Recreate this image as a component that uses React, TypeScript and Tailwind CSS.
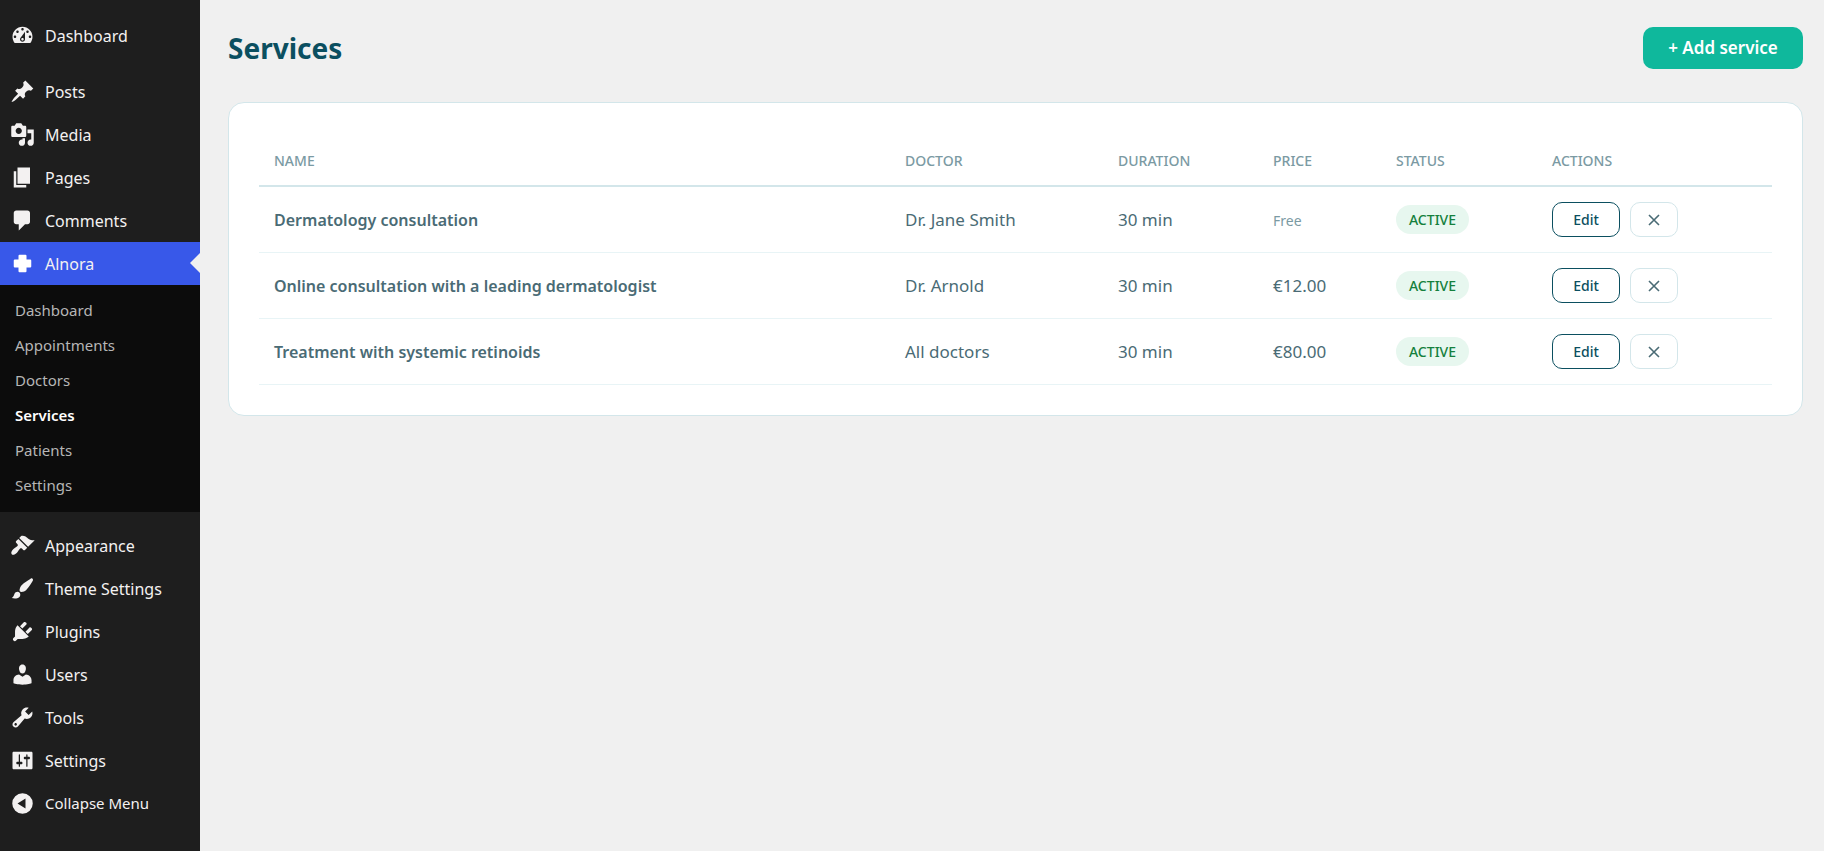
import type { ReactNode } from 'react';

interface MenuItem {
  label: string;
  icon: ReactNode;
}

interface Service {
  name: string;
  doctor: string;
  duration: string;
  price: string | null;
}

const mainItems: MenuItem[] = [
  {
    label: 'Posts',
    icon: <path d="M10.44 3.02l1.82-1.82 6.36 6.35-1.83 1.82c-1.05-.68-2.48-.57-3.41.36l-.75.75c-.92.93-1.04 2.35-.35 3.41l-1.83 1.82-2.41-2.41-2.8 2.79c-.42.42-3.38 2.71-3.8 2.29s1.86-3.39 2.28-3.81l2.79-2.79L4.1 9.36l1.83-1.82c1.05.69 2.48.57 3.4-.36l.75-.75c.93-.92 1.05-2.35.36-3.41z" />,
  },
  {
    label: 'Media',
    icon: <path d="M13 11V4c0-.55-.45-1-1-1h-1.67L9 1H5L3.67 3H2c-.55 0-1 .45-1 1v7c0 .55.45 1 1 1h10c.55 0 1-.45 1-1zM7 4.5c1.38 0 2.5 1.12 2.5 2.5S8.38 9.5 7 9.5 4.5 8.38 4.5 7 5.62 4.5 7 4.5zM14 6h5v10.5c0 1.38-1.12 2.5-2.5 2.5S14 17.88 14 16.5s1.12-2.5 2.5-2.5c.17 0 .34.02.5.05V9h-3V6zm-4 8.05V13h2v3.5c0 1.38-1.12 2.5-2.5 2.5S7 17.88 7 16.5 8.12 14 9.5 14c.17 0 .34.02.5.05z" />,
  },
  { label: 'Pages', icon: <path d="M6 15V2h10v13H6zm-1 1h8v2H3V5h2v11z" /> },
  {
    label: 'Comments',
    icon: <path d="M5 2h9c1.1 0 2 .9 2 2v7c0 1.1-.9 2-2 2h-2l-5 5v-5H5c-1.1 0-2-.9-2-2V4c0-1.1.9-2 2-2z" />,
  },
];

const toolItems: MenuItem[] = [
  {
    label: 'Appearance',
    icon: <path d="M14.48 11.06L7.41 3.99l1.5-1.5c.5-.56 2.3-.47 3.51.32 1.21.8 1.43 1.28 2.91 2.1 1.18.64 2.45 1.26 4.45.85zm-.71.71L6.7 4.7 4.93 6.47c-.39.39-.39 1.02 0 1.41l1.06 1.06c.39.39.39 1.03 0 1.42-.6.6-1.43 1.11-2.21 1.69-.35.26-.7.53-1.01.84C1.43 14.23.4 16.08 1.4 17.07c.99 1 2.84-.03 4.18-1.36.31-.31.58-.66.85-1.02.57-.78 1.08-1.61 1.69-2.21.39-.39 1.02-.39 1.41 0l1.06 1.06c.39.39 1.02.39 1.41 0z" />,
  },
  {
    label: 'Theme Settings',
    icon: <path d="M18.33 3.57s.27-.8-.31-1.36c-.53-.52-1.22-.24-1.22-.24-.61.3-5.76 3.47-7.67 5.57-.86.96-2.06 3.79-1.09 4.82.92.98 3.96-.17 4.79-1 2.06-2.06 5.21-7.17 5.5-7.79zM1.4 17.65c2.37-1.56 1.46-3.41 3.23-4.64.93-.65 2.22-.62 3.08.29.63.67.8 2.57-.16 3.46-1.57 1.45-4 1.55-6.15.89z" />,
  },
  {
    label: 'Plugins',
    icon: <path d="M13.11 4.36L9.87 7.6 8 5.73l3.24-3.24c.35-.34 1.05-.2 1.56.32.52.51.66 1.21.31 1.55zm-8 1.77l.91-1.12 9.01 9.01-1.19.84c-.71.71-2.63 1.16-3.82 1.16H6.14L4.9 17.26c-.59.59-1.54.59-2.12 0-.59-.58-.59-1.53 0-2.12l1.24-1.24v-3.88c0-1.13.4-3.19 1.09-3.89zm7.26 3.97l3.24-3.24c.34-.35 1.04-.21 1.55.31.52.51.66 1.21.31 1.55l-3.24 3.25z" />,
  },
  {
    label: 'Users',
    icon: <path d="M10 9.25c-2.27 0-2.73-3.44-2.73-3.44C7 4.02 7.82 2 9.97 2c2.16 0 2.98 2.02 2.71 3.81 0 0-.41 3.44-2.68 3.44zm0 2.57L12.72 10c2.39 0 4.52 2.33 4.52 4.53v2.49s-3.65 1.13-7.24 1.13c-3.65 0-7.24-1.13-7.24-1.13v-2.49c0-2.25 1.94-4.48 4.47-4.48z" />,
  },
  {
    label: 'Tools',
    icon: <path d="M16.68 9.77c-1.34 1.34-3.3 1.67-4.95.99l-5.41 6.52c-.99.99-2.59.99-3.58 0s-.99-2.59 0-3.57l6.52-5.42c-.68-1.65-.35-3.61.99-4.95 1.28-1.28 3.12-1.62 4.72-1.06l-2.89 2.89 2.82 2.82 2.86-2.87c.53 1.58.18 3.39-1.08 4.65zM3.81 16.21c.4.39 1.04.39 1.43 0 .4-.4.4-1.04 0-1.43-.39-.4-1.03-.4-1.43 0-.39.39-.39 1.03 0 1.43z" />,
  },
  {
    label: 'Settings',
    icon: <path d="M18 16V4c0-.55-.45-1-1-1H3c-.55 0-1 .45-1 1v12c0 .55.45 1 1 1h14c.55 0 1-.45 1-1zM8 11h1c.55 0 1 .45 1 1s-.45 1-1 1H8v1.5c0 .28-.22.5-.5.5s-.5-.22-.5-.5V13H6c-.55 0-1-.45-1-1s.45-1 1-1h1V5.5c0-.28.22-.5.5-.5s.5.22.5.5V11zm5-2h-1c-.55 0-1-.45-1-1s.45-1 1-1h1V5.5c0-.28.22-.5.5-.5s.5.22.5.5V7h1c.55 0 1 .45 1 1s-.45 1-1 1h-1v5.5c0 .28-.22.5-.5.5s-.5-.22-.5-.5V9z" />,
  },
];

const subItems = ['Dashboard', 'Appointments', 'Doctors', 'Services', 'Patients', 'Settings'];

const services: Service[] = [
  { name: 'Dermatology consultation', doctor: 'Dr. Jane Smith', duration: '30 min', price: null },
  { name: 'Online consultation with a leading dermatologist', doctor: 'Dr. Arnold', duration: '30 min', price: '€12.00' },
  { name: 'Treatment with systemic retinoids', doctor: 'All doctors', duration: '30 min', price: '€80.00' },
];

const columns = ['Name', 'Doctor', 'Duration', 'Price', 'Status', 'Actions'];

function MenuIcon({ children }: { children: ReactNode }) {
  return (
    <svg viewBox="0 0 20 20" className="h-[25px] w-[25px] shrink-0" fill="currentColor" fillRule="evenodd" aria-hidden="true">
      {children}
    </svg>
  );
}

function MenuLink({ item }: { item: MenuItem }) {
  return (
    <a href="#" className="flex h-[43px] items-center gap-[10px] pl-[10px] text-base text-[#f3f1f1] hover:text-white">
      <MenuIcon>{item.icon}</MenuIcon>
      {item.label}
    </a>
  );
}

function Sidebar() {
  return (
    <nav className="w-[200px] shrink-0 bg-[#1e1e1e] pt-[14px]">
      <MenuLink
        item={{
          label: 'Dashboard',
          icon: <path d="M3.76 16h12.48c1.1-1.37 1.76-3.11 1.76-5 0-4.42-3.58-8-8-8s-8 3.58-8 8c0 1.89.66 3.63 1.76 5zM10 4c.55 0 1 .45 1 1s-.45 1-1 1-1-.45-1-1 .45-1 1-1zM6 6c.55 0 1 .45 1 1s-.45 1-1 1-1-.45-1-1 .45-1 1-1zm8 0c.55 0 1 .45 1 1s-.45 1-1 1-1-.45-1-1 .45-1 1-1zm-5.37 5.55L12 7v6c0 1.1-.9 2-2 2s-2-.9-2-2c0-.57.24-1.08.63-1.45zM4 10c.55 0 1 .45 1 1s-.45 1-1 1-1-.45-1-1 .45-1 1-1zm12 0c.55 0 1 .45 1 1s-.45 1-1 1-1-.45-1-1 .45-1 1-1zm-5 3c0-.55-.45-1-1-1s-1 .45-1 1 .45 1 1 1 1-.45 1-1z" />,
        }}
      />
      <div className="mt-[13px]">
        {mainItems.map((item) => (
          <MenuLink key={item.label} item={item} />
        ))}
      </div>
      <div className="relative bg-[#3858e9]">
        <MenuLink
          item={{
            label: 'Alnora',
            icon: <path fill="#fff" d="M7.6 3h4.8c.5 0 .8.3.8.8v3h3c.5 0 .8.3.8.8v4.8c0 .5-.3.8-.8.8h-3v3c0 .5-.3.8-.8.8H7.6c-.5 0-.8-.3-.8-.8v-3h-3c-.5 0-.8-.3-.8-.8V7.6c0-.5.3-.8.8-.8h3v-3c0-.5.3-.8.8-.8z" />,
          }}
        />
        {/* arrow pointing at the open section */}
        <span className="absolute top-[11px] right-0 border-y-10 border-r-10 border-y-transparent border-r-[#f0f0f0]" />
      </div>
      <ul className="bg-[#0c0c0c] pt-2 pb-[9px]">
        {subItems.map((label) => (
          <li key={label}>
            <a
              href="#"
              className={
                label === 'Services'
                  ? 'flex h-[35px] items-center pl-[15px] text-[15px] font-semibold text-white'
                  : 'flex h-[35px] items-center pl-[15px] text-[15px] text-[#b6b6b6] hover:text-white'
              }
            >
              {label}
            </a>
          </li>
        ))}
      </ul>
      <div className="mt-3">
        {toolItems.map((item) => (
          <MenuLink key={item.label} item={item} />
        ))}
        <button type="button" className="flex h-[43px] w-full items-center gap-[10px] pl-[10px] text-[15px] text-[#f3f1f1]">
          <MenuIcon>
            <path d="M10 1.8a8.2 8.2 0 1 0 0 16.4 8.2 8.2 0 0 0 0-16.4zM12.4 6v8L6 10z" />
          </MenuIcon>
          Collapse Menu
        </button>
      </div>
    </nav>
  );
}

export default function App() {
  return (
    <div className="flex min-h-screen bg-[#f0f0f0] font-['Noto_Sans','Open_Sans',sans-serif]">
      <Sidebar />
      <main className="min-w-0 flex-1 pt-[27px] pr-[21px] pl-7">
        <div className="mb-[33px] flex items-center justify-between">
          <h1 className="text-[28px] leading-[42px] font-bold text-[#0b4f60]">Services</h1>
          <button type="button" className="h-[42px] w-40 rounded-[10px] bg-[#0fb89c] text-[17px] font-semibold text-white">
            + Add service
          </button>
        </div>

        <div className="rounded-2xl border border-[#d3e6ea] bg-white p-[30px]">
          <table className="w-full table-fixed border-separate border-spacing-0 text-left">
            <colgroup>
              <col className="w-[631px]" />
              <col className="w-[213px]" />
              <col className="w-[155px]" />
              <col className="w-[123px]" />
              <col className="w-[156px]" />
              <col className="w-[235px]" />
            </colgroup>
            <thead>
              <tr>
                {columns.map((column) => (
                  <th key={column} className="h-[54px] border-b-2 border-[#d3e6ea] px-[15px] pt-[3px] text-sm font-medium text-[#7b9aa3] uppercase">
                    {column}
                  </th>
                ))}
              </tr>
            </thead>
            <tbody className="text-[17px] text-[#4a6b75] [&_td]:h-[66px] [&_td]:border-b [&_td]:border-[#e8f4f6] [&_td]:px-[15px]">
              {services.map((service) => (
                <tr key={service.name}>
                  <td className="text-base font-semibold">{service.name}</td>
                  <td>{service.doctor}</td>
                  <td>{service.duration}</td>
                  <td>{service.price ?? <span className="text-sm text-[#7b9aa3]">Free</span>}</td>
                  <td>
                    <span className="flex h-[29px] w-[73px] items-center justify-center rounded-full bg-[#e7f7ef] text-sm font-medium text-[#15803d]">
                      ACTIVE
                    </span>
                  </td>
                  <td>
                    <div className="flex gap-[10px]">
                      <button type="button" className="h-[35px] w-[68px] rounded-[10px] border border-[#0b4f60] text-sm font-medium text-[#0b4f60]">
                        Edit
                      </button>
                      <button
                        type="button"
                        aria-label="Delete"
                        className="flex h-[35px] w-12 items-center justify-center rounded-[10px] border border-[#d3e6ea] text-[#4a6b75]"
                      >
                        <svg viewBox="0 0 12 12" className="h-3 w-3" fill="none" stroke="currentColor" strokeWidth="1.6" aria-hidden="true">
                          <path d="M1 1l10 10M11 1L1 11" />
                        </svg>
                      </button>
                    </div>
                  </td>
                </tr>
              ))}
            </tbody>
          </table>
        </div>
      </main>
    </div>
  );
}
